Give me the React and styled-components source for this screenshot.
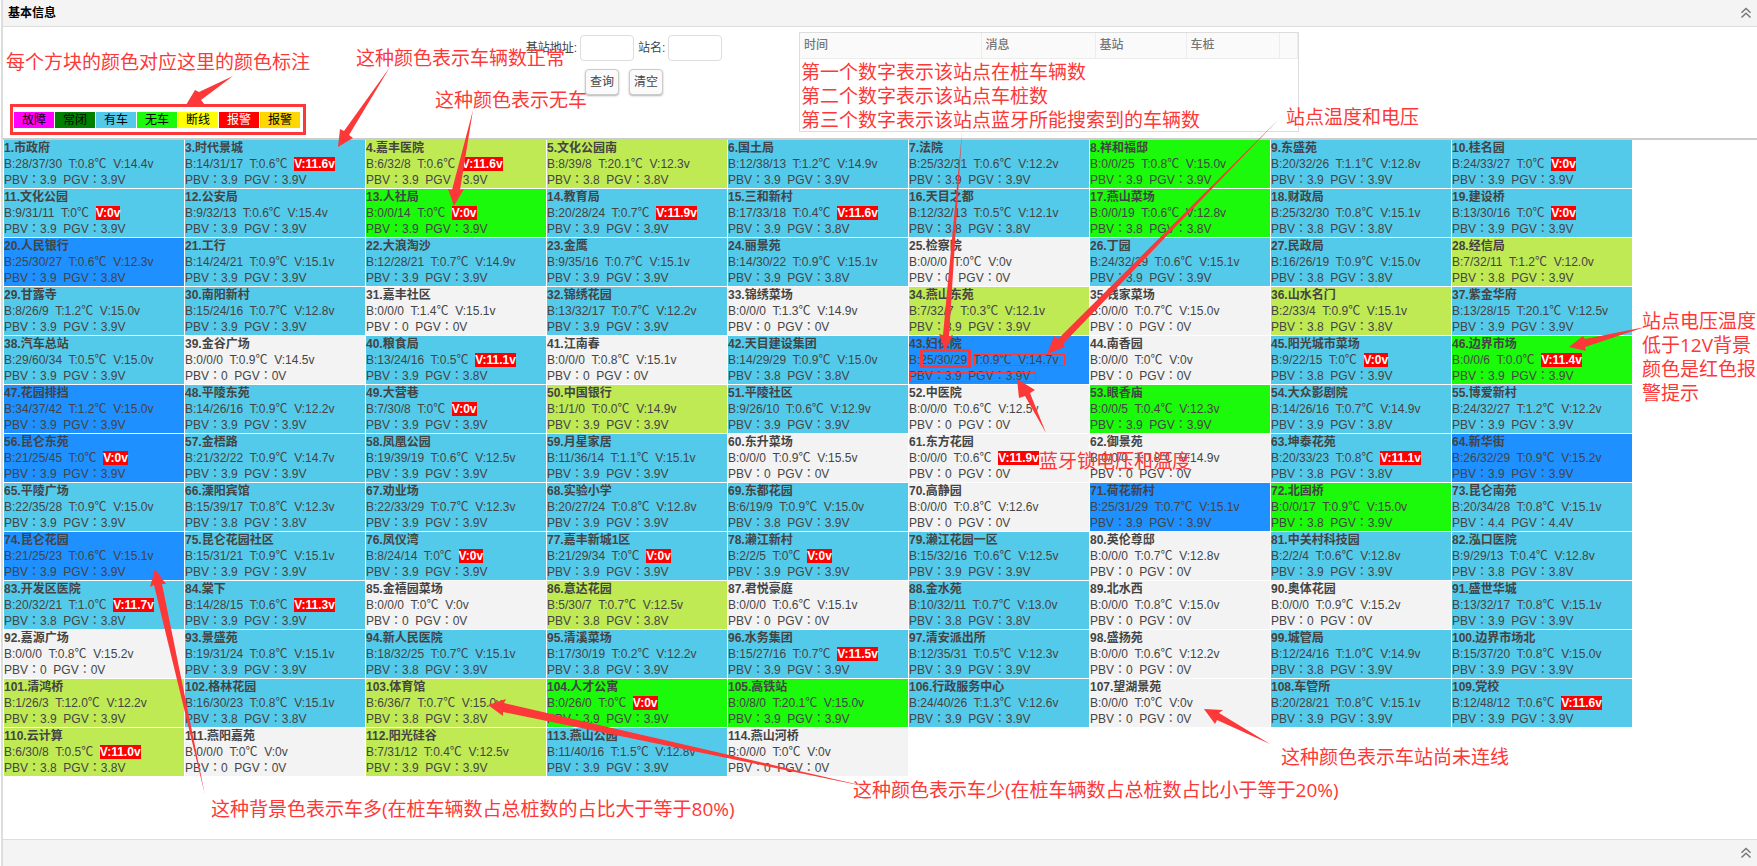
import React from "react";
import styled, { createGlobalStyle } from "styled-components";

const MARK = "#fc3838";

const FILL = {
  normal: "#54caea",
  few: "#bfea54",
  empty: "#1bfa0a",
  many: "#1e90ff",
  offline: "#f3f3f3",
};

/* name | bikes/piles/bluetooth | temperature | voltage | PBV | PGV | state */
const STATIONS = `
1.市政府|28/37/30|0.8|14.4|3.9|3.9|normal
3.时代景城|14/31/17|0.6|11.6|3.9|3.9|normal
4.嘉丰医院|6/32/8|0.6|11.6|3.9|3.9|few
5.文化公园南|8/39/8|20.1|12.3|3.8|3.8|few
6.国土局|12/38/13|1.2|14.9|3.9|3.9|normal
7.法院|25/32/31|0.6|12.2|3.9|3.9|normal
8.祥和福邸|0/0/25|0.8|15.0|3.9|3.9|empty
9.东盛苑|20/32/26|1.1|12.8|3.9|3.9|normal
10.桂名园|24/33/27|0|0|3.9|3.9|normal
11.文化公园|9/31/11|0|0|3.9|3.9|normal
12.公安局|9/32/13|0.6|15.4|3.9|3.9|normal
13.人社局|0/0/14|0|0|3.9|3.9|empty
14.教育局|20/28/24|0.7|11.9|3.9|3.9|normal
15.三和新村|17/33/18|0.4|11.6|3.9|3.8|normal
16.天目之都|12/32/13|0.5|12.1|3.8|3.8|normal
17.燕山菜场|0/0/19|0.6|12.8|3.8|3.8|empty
18.财政局|25/32/30|0.8|15.1|3.8|3.8|normal
19.建设桥|13/30/16|0|0|3.9|3.9|normal
20.人民银行|25/30/27|0.6|12.3|3.9|3.8|many
21.工行|14/24/21|0.9|15.1|3.9|3.9|normal
22.大浪淘沙|12/28/21|0.7|14.9|3.9|3.9|normal
23.金鹰|9/35/16|0.7|15.1|3.9|3.9|normal
24.丽景苑|14/30/22|0.9|15.1|3.9|3.8|normal
25.检察院|0/0/0|0|0|0|0|offline
26.丁园|24/32/29|0.6|15.1|3.9|3.9|normal
27.民政局|16/26/19|0.9|15.0|3.8|3.8|normal
28.经信局|7/32/11|1.2|12.0|3.8|3.9|few
29.甘露寺|8/26/9|1.2|15.0|3.9|3.9|normal
30.南阳新村|15/24/16|0.7|12.8|3.9|3.9|normal
31.嘉丰社区|0/0/0|1.4|15.1|0|0|offline
32.锦绣花园|13/32/17|0.7|12.2|3.9|3.9|normal
33.锦绣菜场|0/0/0|1.3|14.9|0|0|offline
34.燕山东苑|7/32/7|0.3|12.1|3.9|3.9|few
35.钱家菜场|0/0/0|0.7|15.0|0|0|offline
36.山水名门|2/33/4|0.9|15.1|3.8|3.8|few
37.紫金华府|13/28/15|20.1|12.5|3.9|3.9|normal
38.汽车总站|29/60/34|0.5|15.0|3.9|3.9|normal
39.金谷广场|0/0/0|0.9|14.5|0|0|offline
40.粮食局|13/24/16|0.5|11.1|3.9|3.8|normal
41.江南春|0/0/0|0.8|15.1|0|0|offline
42.天目建设集团|14/29/29|0.9|15.0|3.8|3.8|normal
43.妇保院|25/30/29|0.9|14.7|3.9|3.9|many
44.南香园|0/0/0|0|0|0|0|offline
45.阳光城市菜场|9/22/15|0|0|3.8|3.9|normal
46.边界市场|0/0/6|0.0|11.4|3.9|3.9|empty
47.花园排挡|34/37/42|1.2|15.0|3.9|3.9|many
48.平陵东苑|14/26/16|0.9|12.2|3.9|3.9|normal
49.大营巷|7/30/8|0|0|3.9|3.9|normal
50.中国银行|1/1/0|0.0|14.9|3.9|3.9|few
51.平陵社区|9/26/10|0.6|12.9|3.9|3.9|normal
52.中医院|0/0/0|0.6|12.5|0|0|offline
53.眼香庙|0/0/5|0.4|12.3|3.9|3.9|empty
54.大众影剧院|14/26/16|0.7|14.9|3.9|3.8|normal
55.博爱新村|24/32/27|1.2|12.2|3.9|3.9|normal
56.昆仑东苑|21/25/45|0|0|3.9|3.9|many
57.金梧路|21/32/22|0.9|14.7|3.9|3.9|normal
58.凤凰公园|19/39/19|0.6|12.5|3.9|3.9|normal
59.月星家居|11/36/14|1.1|15.1|3.9|3.9|normal
60.东升菜场|0/0/0|0.9|15.5|0|0|offline
61.东方花园|0/0/0|0.6|11.9|0|0|offline
62.御景苑|0/0/0|0.8|14.9|0|0|offline
63.坤泰花苑|20/33/23|0.8|11.1|3.8|3.8|normal
64.新华街|26/32/29|0.9|15.2|3.9|3.9|many
65.平陵广场|22/35/28|0.9|15.0|3.9|3.9|normal
66.溧阳宾馆|15/39/17|0.8|12.3|3.8|3.8|normal
67.劝业场|22/33/29|0.7|12.3|3.9|3.9|normal
68.实验小学|20/27/24|0.8|12.8|3.9|3.9|normal
69.东都花园|6/19/9|0.9|15.0|3.8|3.9|normal
70.高静园|0/0/0|0.8|12.6|0|0|offline
71.荷花新村|25/31/29|0.7|15.1|3.9|3.9|many
72.北固桥|0/0/17|0.9|15.0|3.8|3.9|empty
73.昆仑南苑|20/34/28|0.8|15.1|4.4|4.4|normal
74.昆仑花园|21/25/23|0.6|15.1|3.9|3.9|many
75.昆仑花园社区|15/31/21|0.9|15.1|3.9|3.9|normal
76.凤仪湾|8/24/14|0|0|3.9|3.9|normal
77.嘉丰新城1区|21/29/34|0|0|3.9|3.9|normal
78.濑江新村|2/2/5|0|0|3.9|3.9|normal
79.濑江花园一区|15/32/16|0.6|12.5|3.9|3.9|normal
80.英伦尊邸|0/0/0|0.7|12.8|0|0|offline
81.中关村科技园|2/2/4|0.6|12.8|3.9|3.9|normal
82.泓口医院|9/29/13|0.4|12.8|3.8|3.8|normal
83.开发区医院|20/32/21|1.0|11.7|3.8|3.8|normal
84.棠下|14/28/15|0.6|11.3|3.9|3.9|normal
85.金禧园菜场|0/0/0|0|0|0|0|offline
86.意达花园|5/30/7|0.7|12.5|3.8|3.8|few
87.君悦豪庭|0/0/0|0.6|15.1|0|0|offline
88.金水苑|10/32/11|0.7|13.0|3.8|3.8|normal
89.北水西|0/0/0|0.8|15.0|0|0|offline
90.奥体花园|0/0/0|0.9|15.2|0|0|offline
91.盛世华城|13/32/17|0.8|15.1|3.9|3.9|normal
92.嘉源广场|0/0/0|0.8|15.2|0|0|offline
93.景盛苑|19/31/24|0.8|15.1|3.9|3.9|normal
94.新人民医院|18/32/25|0.7|15.1|3.8|3.9|normal
95.清溪菜场|17/30/19|0.2|12.2|3.8|3.9|normal
96.水务集团|15/27/16|0.7|11.5|3.9|3.9|normal
97.清安派出所|12/35/31|0.5|12.3|3.9|3.9|normal
98.盛扬苑|0/0/0|0.6|12.2|0|0|offline
99.城管局|12/24/16|1.0|14.9|3.8|3.9|normal
100.边界市场北|15/37/20|0.8|15.0|3.9|3.9|normal
101.清鸿桥|1/26/3|12.0|12.2|3.9|3.9|few
102.格林花园|16/30/23|0.8|15.1|3.8|3.8|normal
103.体育馆|6/36/7|0.7|15.0|3.8|3.8|few
104.人才公寓|0/26/0|0|0|3.9|3.9|empty
105.高铁站|0/8/0|20.1|15.0|3.9|3.9|empty
106.行政服务中心|24/40/26|1.3|12.6|3.9|3.9|normal
107.望湖景苑|0/0/0|0|0|0|0|offline
108.车管所|20/28/21|0.8|15.1|3.9|3.9|normal
109.党校|12/48/12|0.6|11.6|3.9|3.9|normal
110.云计算|6/30/8|0.5|11.0|3.8|3.8|few
111.燕阳嘉苑|0/0/0|0|0|0|0|offline
112.阳光硅谷|7/31/12|0.4|12.5|3.9|3.9|few
113.燕山公园|11/40/16|1.5|12.8|3.9|3.9|normal
114.燕山河桥|0/0/0|0|0|0|0|offline
`
  .trim()
  .split("\n")
  .map((line) => {
    const [name, counts, temp, volt, pbv, pgv, state] = line.split("|");
    /* idle stations without any reading are never in alarm */
    const silent = state === "offline" && volt === "0";
    return { name, counts, temp, volt, pbv, pgv, state, alarm: Number(volt) < 12 && !silent };
  });

const LEGEND = [
  ["故障", "#ff00ff", "#000"],
  ["常闭", "#008000", "#000"],
  ["有车", FILL.normal, "#000"],
  ["无车", FILL.empty, "#000"],
  ["断线", "#ffff00", "#000"],
  ["报警", "#ff0000", "#fff"],
  ["报警", "#ffd700", "#000"],
];

const NOTES = [
  { x: 6, y: 50, lines: ["每个方块的颜色对应这里的颜色标注"] },
  { x: 356, y: 46, lines: ["这种颜色表示车辆数正常"] },
  { x: 435, y: 88, lines: ["这种颜色表示无车"] },
  {
    x: 801,
    y: 60,
    lines: [
      "第一个数字表示该站点在桩车辆数",
      "第二个数字表示该站点车桩数",
      "第三个数字表示该站点蓝牙所能搜索到的车辆数",
    ],
  },
  { x: 1286, y: 105, lines: ["站点温度和电压"] },
  { x: 1642, y: 309, lines: ["站点电压温度", "低于12V背景", "颜色是红色报", "警提示"] },
  { x: 1039, y: 449, lines: ["蓝牙锁电压和温度"] },
  { x: 211, y: 797, lines: ["这种背景色表示车多(在桩车辆数占总桩数的占比大于等于80%)"] },
  { x: 853, y: 778, lines: ["这种颜色表示车少(在桩车辆数占总桩数占比小于等于20%)"] },
  { x: 1281, y: 745, lines: ["这种颜色表示车站尚未连线"] },
];

const ARROWS = [
  "233,76 199,92 195,90 186,105 205,105 201,100",
  "390,67 344,131 340,129 338,147 353,138 349,135",
  "473,110 452,190 448,189 454,206 464,189 460,190",
  "962,132 943,335 939,334 945,351 953,335 949,336",
  "1279,119 1058,339 1054,336 1047,354 1065,347 1063,344",
  "1046,433 1025,396 1019,398 1017,379 1035,390 1030,393",
  "1645,327 1585,339 1583,336 1569,347 1586,351 1585,347",
  "205,795 154,585 150,587 155,569 166,584 162,584",
  "873,788 504,703 506,699 488,705 503,716 503,712",
  "1270,744 1219,713 1223,710 1204,709 1215,724 1217,720",
];

const GlobalStyle = createGlobalStyle`
  * { box-sizing: border-box; }
  body {
    margin: 0;
    background: #fff;
    color: #444;
    font: 12px/16px "Liberation Sans", "Noto Sans CJK SC", sans-serif;
  }
`;

const Page = styled.div`
  position: relative;
  display: flex;
  flex-direction: column;
  min-height: 100vh;
  margin-left: 1px;
  border-left: 2px solid #ddd;
  overflow: hidden;
`;

const Bar = styled.header`
  display: flex;
  align-items: center;
  justify-content: space-between;
  height: 27px;
  padding: 0 5px;
  background: #f4f4f4;
  border: 0 solid #ddd;
  border-width: ${(p) => (p.$bottom ? "1px 0 0" : "0 0 1px")};
`;

const Title = styled.h1`
  margin: 0;
  color: #000;
  font-size: 12px;
  line-height: 16px;
`;

const Collapse = styled.button`
  display: flex;
  margin-left: auto;
  padding: 0;
  border: 0;
  background: none;
  color: #777;
`;

const Tools = styled.section`
  display: grid;
  grid-template-columns: minmax(310px, 446fr) 350px minmax(500px, 958fr);
  padding: 5px 0 6px;
  border-bottom: 2px solid #ccc;
`;

const Legend = styled.ul`
  display: flex;
  gap: 1px;
  align-self: end;
  margin: 0;
  padding: 0 0 4px 11px;
  list-style: none;
`;

const Swatch = styled.li`
  width: 40px;
  text-align: center;
  background: ${(p) => p.$fill};
  color: ${(p) => p.$ink};
`;

const Search = styled.form`
  display: flex;
  flex-direction: column;
  align-items: center;
  gap: 8px;
  padding-top: 3px;
`;

const Fields = styled.div`
  display: flex;
  align-items: center;
  gap: 4px;
`;

const Label = styled.label`
  display: flex;
  align-items: center;
  gap: 3px;
`;

const Input = styled.input`
  width: 54px;
  height: 26px;
  padding: 0 4px;
  border: 1px solid #ddd;
  border-radius: 4px;
  font: inherit;
`;

const Buttons = styled.div`
  display: flex;
  gap: 10px;
`;

const Button = styled.button`
  width: 34px;
  height: 26px;
  padding: 0;
  border: 1px solid #ccc;
  border-radius: 4px;
  background: #fafafa;
  box-shadow: 0 1px 2px rgba(0, 0, 0, 0.3);
  color: #444;
  font: inherit;
`;

const MessageBox = styled.div`
  width: 500px;
  height: 100px;
  border: 1px solid #ddd;
`;

const MessageTable = styled.table`
  width: 100%;
  table-layout: fixed;
  border-collapse: collapse;
`;

const Th = styled.th`
  width: ${(p) => p.$width};
  height: 25px;
  padding: 0 4px;
  background: #fafafa;
  border-right: 1px solid #ededed;
  border-bottom: 1px solid #ededed;
  color: #777;
  font-weight: 500;
  text-align: left;
`;

const Stations = styled.ul`
  display: grid;
  grid-template-columns: repeat(auto-fill, 180px);
  gap: 1px;
  margin: 0 0 auto;
  padding: 0 0 0 1px;
  list-style: none;
`;

const Station = styled.li`
  height: 48px;
  background: ${(p) => p.$fill};
  white-space: pre;
`;

const Name = styled.strong`
  display: block;
  height: 16px;
`;

const Reading = styled.div`
  height: 16px;
`;

/* the traditional face centres the full-width colon */
const Battery = styled.div`
  height: 16px;
  font-family: "Liberation Sans", "Noto Sans CJK TC", sans-serif;
`;

const Alarm = styled.b`
  background: #f00;
  color: #fff;
`;

const Overlay = styled.div`
  position: absolute;
  top: 0;
  left: -3px;
  pointer-events: none;
`;

const Drawing = styled.svg`
  display: block;
`;

const Note = styled.p`
  position: absolute;
  left: ${(p) => p.$x}px;
  top: ${(p) => p.$y}px;
  margin: 0;
  color: ${MARK};
  font: 400 19px/24px "Open Sans", "Noto Sans CJK SC", sans-serif;
  white-space: pre;
`;

function ChevronsUp() {
  return (
    <svg width="12" height="12" viewBox="0 0 12 12" fill="none" stroke="currentColor" strokeWidth="1.5" aria-hidden="true">
      <path d="M1.5 5.8 6 1.5l4.500 4.300M1.500 10.500 6 6.200l4.500 4.300" />
    </svg>
  );
}

function StationCell({ station: s }) {
  const volt = `V:${s.volt}v`;
  return (
    <Station $fill={FILL[s.state]}>
      <Name>{s.name}</Name>
      <Reading>
        {`B:${s.counts}  T:${s.temp}℃  `}
        {s.alarm ? <Alarm>{volt}</Alarm> : volt}
      </Reading>
      <Battery>{`PBV：${s.pbv}  PGV：${s.pgv}V`}</Battery>
    </Station>
  );
}

function Annotations() {
  return (
    <Overlay>
      <Drawing width="1757" height="866" viewBox="0 0 1757 866" fill="none" stroke={MARK} aria-hidden="true">
        <rect x="11.500" y="105.500" width="293" height="28" strokeWidth="3" />
        <rect x="921.500" y="350.500" width="48" height="16" strokeWidth="3" />
        <rect x="974.500" y="354.500" width="90" height="11" />
        <rect x="910.500" y="372.500" width="125" height="9" />
        {ARROWS.map((points) => (
          <polygon key={points} points={points} fill={MARK} stroke="none" />
        ))}
      </Drawing>
      {NOTES.map((n) => (
        <Note key={n.y} $x={n.x} $y={n.y}>
          {n.lines.join("\n")}
        </Note>
      ))}
    </Overlay>
  );
}

export default function App() {
  return (
    <>
      <GlobalStyle />
      <Page>
        <Bar>
          <Title>基本信息</Title>
          <Collapse type="button" aria-label="收起">
            <ChevronsUp />
          </Collapse>
        </Bar>
        <Tools>
          <Legend>
            {LEGEND.map(([text, fill, ink]) => (
              <Swatch key={fill} $fill={fill} $ink={ink}>
                {text}
              </Swatch>
            ))}
          </Legend>
          <Search onSubmit={(e) => e.preventDefault()}>
            <Fields>
              <Label>
                基站地址:
                <Input type="text" name="address" />
              </Label>
              <Label>
                站名:
                <Input type="text" name="station" />
              </Label>
            </Fields>
            <Buttons>
              <Button type="submit">查询</Button>
              <Button type="reset">清空</Button>
            </Buttons>
          </Search>
          <MessageBox>
            <MessageTable>
              <thead>
                <tr>
                  <Th $width="181px">时间</Th>
                  <Th $width="114px">消息</Th>
                  <Th $width="91px">基站</Th>
                  <Th $width="93px">车桩</Th>
                  <Th as="td" />
                </tr>
              </thead>
            </MessageTable>
          </MessageBox>
        </Tools>
        <Stations>
          {STATIONS.map((s) => (
            <StationCell key={s.name} station={s} />
          ))}
        </Stations>
        <Bar as="footer" $bottom>
          <Collapse type="button" aria-label="展开">
            <ChevronsUp />
          </Collapse>
        </Bar>
        <Annotations />
      </Page>
    </>
  );
}
